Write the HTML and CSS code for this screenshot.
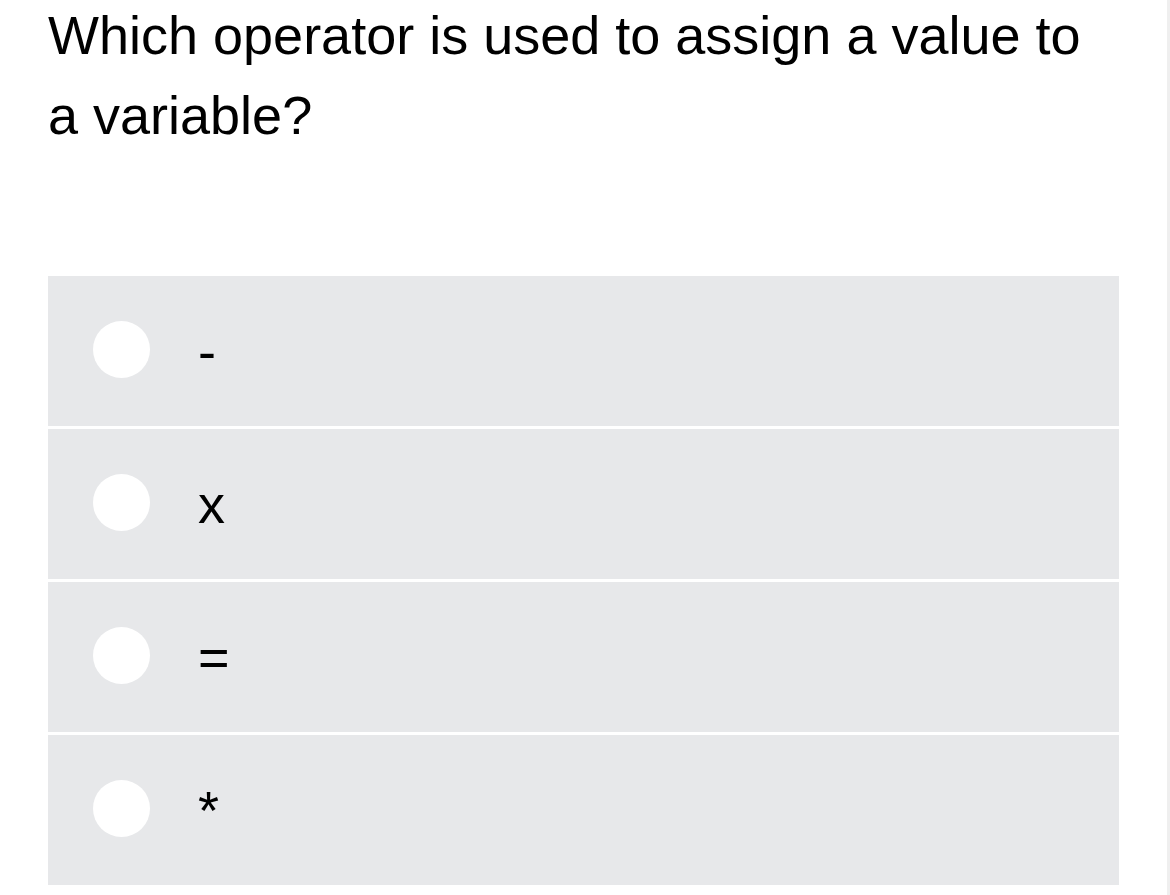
FILE: index.html
```html
<!DOCTYPE html>
<html lang="en">
<head>
<meta charset="utf-8">
<title>Quiz</title>
<link rel="stylesheet" href="styles.css">
</head>
<body>
<div class="page">
  <main class="quiz">
    <h1 class="question">Which operator is used to assign a value to a variable?</h1>
    <ul class="options">
      <li class="option"><span class="radio"></span><span class="label">-</span></li>
      <li class="option"><span class="radio"></span><span class="label">x</span></li>
      <li class="option"><span class="radio"></span><span class="label">=</span></li>
      <li class="option"><span class="radio"></span><span class="label">*</span></li>
    </ul>
  </main>
  <div class="edge"></div>
</div>
</body>
</html>
```

FILE: styles.css
```css
html, body {
  margin: 0;
  padding: 0;
  background: #ffffff;
}

body {
  font-family: "Liberation Sans", Arial, sans-serif;
  color: #000000;
  overflow: hidden;
}

.page {
  display: flex;
  min-height: 895px;
}

.quiz {
  flex: 1;
  padding: 0 48px;
}

.edge {
  width: 3px;
  background: #efefef;
}

.question {
  margin: -5px 0 121px 0;
  font-size: 54px;
  font-weight: 400;
  line-height: 80px;
}

.options {
  list-style: none;
  margin: 0;
  padding: 0;
  display: flex;
  flex-direction: column;
  gap: 3px;
}

.option {
  height: 150px;
  background: #e7e8ea;
  display: flex;
  align-items: center;
  padding-left: 45px;
  gap: 48px;
  font-size: 54px;
  line-height: 80px;
}

.radio {
  width: 57px;
  height: 57px;
  border-radius: 50%;
  background: #ffffff;
  margin-bottom: 3px;
  flex: none;
}

.label {
  display: block;
}
```
